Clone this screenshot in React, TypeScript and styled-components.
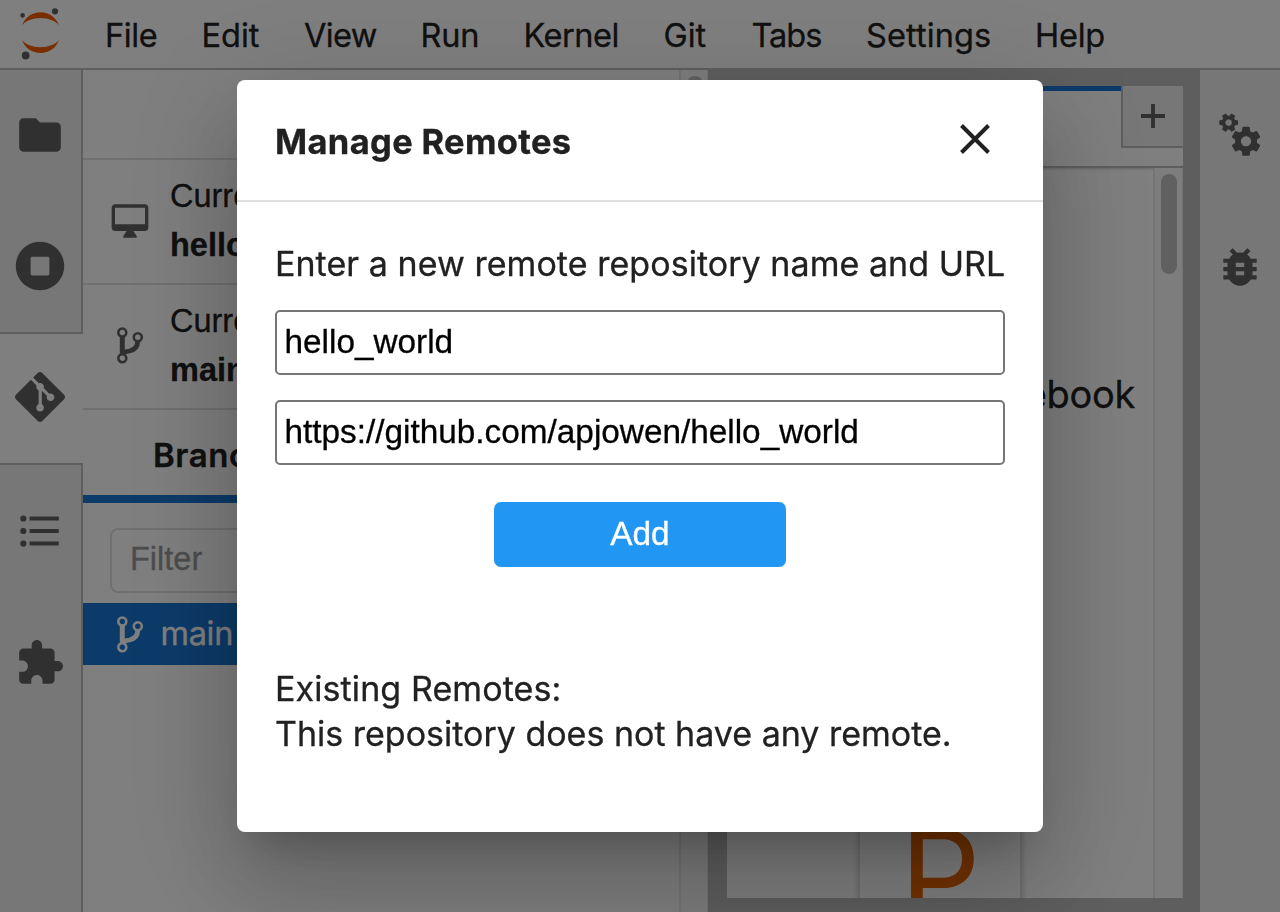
import React from 'react';
import styled, { createGlobalStyle } from 'styled-components';
import { SiGit } from 'react-icons/si';

const UI = `Inter, 'Liberation Sans', sans-serif`;
const ARIAL = `'Liberation Sans', Arial, sans-serif`;

const GlobalStyle = createGlobalStyle`
  *, *::before, *::after { box-sizing: border-box; }
  body { margin: 0; overflow: hidden; font-family: ${UI}; color: #212121; -webkit-text-stroke: 0.3px; }
`;

const Page = styled.div`
  width: 1280px;
  height: 912px;
  display: flex;
  flex-direction: column;
  background: #fff;
  overflow: hidden;
`;

const MenuBar = styled.header`
  flex: none;
  height: 70px;
  display: flex;
  align-items: center;
  border-bottom: 2px solid #bdbdbd;
`;

const LogoBox = styled.div`
  width: 105px;
  height: 68px;
`;

const MenuItem = styled.span<{ $width: number; $tracking?: number }>`
  width: ${(p) => p.$width}px;
  font-size: 32.5px;
  line-height: 40px;
  padding-top: 4px;
  white-space: nowrap;
  letter-spacing: ${(p) => p.$tracking ?? 0}px;
`;

const Main = styled.div`
  flex: 1;
  min-height: 0;
  display: flex;
`;

const SideBar = styled.nav`
  flex: none;
  width: 83px;
  display: flex;
  flex-direction: column;
  background: #eee;
`;

const RightBar = styled(SideBar)`
  width: 80px;
`;

const SideTab = styled.div<{ $height: number; $active?: boolean; $edge?: boolean }>`
  flex: none;
  height: ${(p) => p.$height}px;
  display: flex;
  align-items: center;
  justify-content: center;
  color: #616161;
  background: ${(p) => (p.$active ? '#fff' : '#eee')};
  border: 0 solid #bdbdbd;
  border-right-width: ${(p) => (p.$edge ? 2 : 0)}px;
  padding-right: ${(p) => (p.$edge ? 2 : 0)}px;
  ${(p) => p.$active && 'border-top-width: 2px; border-bottom-width: 2px; padding: 0 3px 4px 0;'}
  svg { display: block; flex: none; }
`;

const SideFill = styled.div`
  flex: 1;
  border-right: 2px solid #bdbdbd;
`;

const GitPanel = styled.section`
  flex: none;
  width: 625px;
  display: flex;
`;

const GitContent = styled.div`
  width: 596px;
  display: flex;
  flex-direction: column;
`;

const ScrollTrack = styled.div<{ $width: number; $top: number }>`
  flex: none;
  width: ${(p) => p.$width}px;
  padding-top: ${(p) => p.$top}px;
  padding-left: 1px;
  display: flex;
  justify-content: center;
  background: #fafafa;
  border: solid #e8e8e8;
  border-width: 0 1px 0 2px;
`;

const Thumb = styled.div<{ $height: number }>`
  width: 16px;
  height: ${(p) => p.$height}px;
  border-radius: 8px;
  background: #c1c1c1;
`;

const GitToolbar = styled.div`
  height: 90px;
  border-bottom: 2px solid #e0e0e0;
`;

const RepoRow = styled.div`
  height: 125px;
  display: flex;
  border-bottom: 2px solid #e0e0e0;
`;

const RepoIcon = styled.div`
  width: 87px;
  padding: 0 0 2px 7px;
  display: flex;
  align-items: center;
  justify-content: center;
  color: #616161;
`;

const RepoText = styled.div`
  padding-top: 12px;
  font: 32.5px/49px ${ARIAL};
  white-space: nowrap;
  strong { display: block; }
`;

const BranchTabs = styled.div`
  height: 93px;
  padding: 5px 0 0 70px;
  border-bottom: 8px solid #1976d2;
  font-size: 33px;
  font-weight: 600;
  line-height: 80px;
  letter-spacing: 0.6px;
`;

const Filter = styled.div`
  height: 65px;
  margin: 25px 27px 10px;
  padding: 0 18px;
  border: 2px solid #e0e0e0;
  border-radius: 8px;
  color: #9a9a9a;
  font: 32.5px/59px ${ARIAL};
`;

const BranchRow = styled.div`
  height: 62px;
  padding: 0 0 0 34px;
  display: flex;
  align-items: center;
  gap: 16.5px;
  background: #1976d2;
  color: #fff;
  font-size: 32.5px;
  line-height: 40px;
  letter-spacing: -0.3px;
`;

const Dock = styled.section`
  flex: 1;
  min-width: 0;
  display: flex;
  flex-direction: column;
  padding: 16px 17px 14px 19px;
  background: #bdbdbd;
`;

const DockTabs = styled.div`
  flex: none;
  height: 82px;
  display: flex;
  align-items: flex-start;
  background: #fff;
  border-bottom: 2px solid #bdbdbd;
`;

const DockTab = styled.div`
  flex: 1;
  height: 80px;
  border-top: 5px solid #1976d2;
`;

const NewTab = styled.div`
  width: 62px;
  height: 62px;
  display: flex;
  align-items: center;
  justify-content: center;
  background: #eee;
  border: solid #bdbdbd;
  border-width: 0 0 2px 2px;
`;

const Launcher = styled.div`
  flex: 1;
  min-height: 0;
  display: flex;
  background: #fff;
  box-shadow: inset 0 3px 3px -2px #0003;
`;

const LauncherBody = styled.div`
  flex: 1;
  min-width: 0;
  overflow: hidden;
`;

const LauncherHeading = styled.h2`
  margin: 0;
  height: 480px;
  padding: 201px 18px 0 0;
  text-align: right;
  font-size: 38px;
  font-weight: 400;
  line-height: 50px;
  letter-spacing: -0.3px;
`;

const LauncherCard = styled.div`
  width: 160px;
  height: 270px;
  margin-left: 133px;
  padding: 127px 0 0 40px;
  box-shadow: 0 0 6px 2px rgba(0, 0, 0, 0.2);
  color: #e66300;
  font: 400 126px/200px ${UI};
  -webkit-text-stroke: 0;
`;

const Backdrop = styled.div`
  position: fixed;
  inset: 0;
  display: flex;
  align-items: center;
  justify-content: center;
  background: rgba(0, 0, 0, 0.5);
`;

const Dialog = styled.div`
  width: 806px;
  height: 752px;
  background: #fff;
  border-radius: 8px;
  box-shadow:
    0 27.5px 37.5px -17.5px rgba(0, 0, 0, 0.2),
    0 60px 95px 7.5px rgba(0, 0, 0, 0.14),
    0 22.5px 115px 20px rgba(0, 0, 0, 0.12);
`;

const DialogHeader = styled.div`
  height: 122px;
  padding: 0 52px 0 38px;
  display: flex;
  align-items: center;
  justify-content: space-between;
  border-bottom: 2px solid #e0e0e0;
`;

const DialogTitle = styled.h1`
  margin: 0;
  padding-top: 4px;
  font-size: 34.5px;
  font-weight: 700;
  line-height: 44px;
  letter-spacing: 0.33px;
`;

const CloseIcon = styled.svg`
  display: block;
  margin-top: -2px;
`;

const DialogBody = styled.div`
  padding: 39px 38px 0;
  display: flex;
  flex-direction: column;
`;

const Line = styled.p<{ $tracking: number }>`
  margin: 0;
  font-size: 34px;
  line-height: 45px;
  white-space: nowrap;
  letter-spacing: ${(p) => p.$tracking}px;
`;

const Field = styled.input`
  width: 730px;
  height: 65px;
  margin: 0 0 25px;
  padding: 0 8px 1px 7.5px;
  border: 2px solid #767676;
  border-radius: 5px;
  outline: none;
  background: #fff;
  color: #000;
  font: 33.33px ${ARIAL};
`;

const Fields = styled.div`
  margin-top: 24px;
  display: flex;
  flex-direction: column;
`;

const AddButton = styled.button`
  align-self: center;
  width: 292px;
  height: 65px;
  margin: 12px 0 99px;
  padding: 0 0 2px;
  border: 0;
  border-radius: 7px;
  background: #2196f3;
  color: #fff;
  font: 33.33px ${ARIAL};
`;

const Glyph = ({ d, size = 50, box = 24 }: { d: string; size?: number; box?: number }) => (
  <svg width={size} height={size} viewBox={`0 0 ${box} ${box}`} fill="currentColor">
    <path d={d} />
  </svg>
);

const FOLDER = 'M10 4H4c-1.1 0-1.99.9-1.99 2L2 18c0 1.1.9 2 2 2h16c1.1 0 2-.9 2-2V8c0-1.1-.9-2-2-2h-8l-2-2z';
const RUNNING =
  'M256 8C119 8 8 119 8 256s111 248 248 248 248-111 248-248S393 8 256 8zm96 328c0 8.8-7.2 16-16 16H176c-8.8 0-16-7.2-16-16V176c0-8.8 7.2-16 16-16h160c8.8 0 16 7.2 16 16v160z';
const TOC =
  'M7,5H21V7H7V5M7,13V11H21V13H7M4,4.5A1.5,1.5 0 0,1 5.5,6A1.5,1.5 0 0,1 4,7.5A1.5,1.5 0 0,1 2.5,6A1.5,1.5 0 0,1 4,4.5M4,10.5A1.5,1.5 0 0,1 5.5,12A1.5,1.5 0 0,1 4,13.5A1.5,1.5 0 0,1 2.5,12A1.5,1.5 0 0,1 4,10.5M7,19V17H21V19H7M4,16.5A1.5,1.5 0 0,1 5.5,18A1.5,1.5 0 0,1 4,19.5A1.5,1.5 0 0,1 2.5,18A1.5,1.5 0 0,1 4,16.5Z';
const EXTENSION =
  'M20.5 11H19V7c0-1.1-.9-2-2-2h-4V3.5C13 2.12 11.88 1 10.5 1S8 2.12 8 3.5V5H4c-1.1 0-1.99.9-1.99 2v3.8H3.5c1.49 0 2.7 1.21 2.7 2.7s-1.21 2.7-2.7 2.7H2V20c0 1.1.9 2 2 2h3.8v-1.5c0-1.49 1.21-2.7 2.7-2.7 1.49 0 2.7 1.21 2.7 2.7V22H17c1.1 0 2-.9 2-2v-4h1.5c1.38 0 2.5-1.12 2.5-2.5S21.88 11 20.5 11z';
const BUG =
  'M20 8h-2.81c-.45-.78-1.07-1.45-1.82-1.96L17 4.41 15.59 3l-2.17 2.17C12.96 5.06 12.49 5 12 5c-.49 0-.96.06-1.41.17L8.41 3 7 4.41l1.62 1.63C7.88 6.55 7.26 7.22 6.81 8H4v2h2.09c-.05.33-.09.66-.09 1v1H4v2h2v1c0 .34.04.67.09 1H4v2h2.81c1.04 1.79 2.97 3 5.19 3s4.15-1.21 5.19-3H20v-2h-2.09c.05-.33.09-.66.09-1v-1h2v-2h-2v-1c0-.34-.04-.67-.09-1H20V8zm-6 8h-4v-2h4v2zm0-4h-4v-2h4v2z';
const DESKTOP =
  'M21 2H3c-1.1 0-2 .9-2 2v12c0 1.1.9 2 2 2h7l-2 3v1h8v-1l-2-3h7c1.1 0 2-.9 2-2V4c0-1.1-.9-2-2-2zm0 12H3V4h18v10z';
const GEAR =
  'M14.9 17.45C16.25 17.45 17.35 16.35 17.35 15C17.35 13.65 16.25 12.55 14.9 12.55C13.54 12.55 12.45 13.65 12.45 15C12.45 16.35 13.54 17.45 14.9 17.45ZM20.1 15.68L21.58 16.84C21.71 16.95 21.75 17.13 21.66 17.29L20.26 19.71C20.17 19.86 20 19.92 19.83 19.86L18.09 19.16C17.73 19.44 17.33 19.67 16.91 19.85L16.64 21.7C16.62 21.87 16.47 22 16.3 22H13.5C13.32 22 13.18 21.87 13.15 21.7L12.89 19.85C12.46 19.67 12.07 19.44 11.71 19.16L9.96 19.86C9.81 19.92 9.62 19.86 9.54 19.71L8.14 17.29C8.05 17.13 8.09 16.95 8.22 16.84L9.7 15.68L9.65 15L9.7 14.31L8.22 13.16C8.09 13.05 8.05 12.86 8.14 12.71L9.54 10.29C9.62 10.13 9.81 10.07 9.96 10.13L11.71 10.84C12.07 10.56 12.46 10.32 12.89 10.15L13.15 8.29C13.18 8.13 13.32 8 13.5 8H16.3C16.47 8 16.62 8.13 16.64 8.29L16.91 10.15C17.33 10.32 17.73 10.56 18.09 10.84L19.83 10.13C20 10.07 20.17 10.13 20.26 10.29L21.66 12.71C21.75 12.86 21.71 13.05 21.58 13.16L20.1 14.31L20.15 15L20.1 15.68Z';

const Gears = () => (
  <svg width="50" height="50" viewBox="0 0 24 24" fill="currentColor" fillRule="evenodd">
    <path d={GEAR} />
    <path d={GEAR} transform="translate(6.54 6.08) rotate(30) scale(.64) translate(-14.9 -15)" />
  </svg>
);

const Branch = () => (
  <svg width="27" height="37" viewBox="0 0 27 37" fill="none" stroke="currentColor">
    <g strokeWidth="2.6">
      <circle cx="5.3" cy="5.5" r="4" />
      <circle cx="20.8" cy="10.3" r="4" />
      <circle cx="5.3" cy="31.2" r="4" />
    </g>
    <path d="M5.3 9.4V27.3" strokeWidth="5" />
    <path d="M20.8 14.2C20.6 20.5 17.5 23 12.5 24C8.8 24.6 7 25.2 5.6 27" strokeWidth="4.8" />
  </svg>
);

const Logo = () => (
  <svg width="80" height="68" viewBox="0 0 80 68">
    <g fill="#f25c05">
      <path d="M22 25.5C25 17.5 32 12.3 40.5 12.3S56 17.5 59 25.5C55.5 20.8 48.5 18 40.5 18S25.5 20.8 22 25.5Z" />
      <path d="M22 40C25 48 32 53 40.5 53S56 48 59 40C55.5 44.5 48.5 47.2 40.5 47.2S25.5 44.5 22 40Z" />
    </g>
    <g fill="#616161">
      <circle cx="22.6" cy="15.4" r="2.3" />
      <circle cx="55" cy="11.3" r="3.1" />
      <circle cx="25.7" cy="55.5" r="3.9" />
    </g>
  </svg>
);

const MENU: [string, number, number][] = [
  ['File', 96.5, -0.4],
  ['Edit', 102.5, 0],
  ['View', 116.5, -0.6],
  ['Run', 103, -0.2],
  ['Kernel', 140, -0.5],
  ['Git', 88, 0],
  ['Tabs', 114.5, -1],
  ['Settings', 169, 0.1],
  ['Help', 80, -0.2],
];

export default function App() {
  return (
    <>
      <GlobalStyle />
      <Page>
        <MenuBar>
          <LogoBox>
            <Logo />
          </LogoBox>
          {MENU.map(([label, width, tracking]) => (
            <MenuItem key={label} $width={width} $tracking={tracking}>
              {label}
            </MenuItem>
          ))}
        </MenuBar>
        <Main>
          <SideBar>
            <SideTab $height={130} $edge><Glyph d={FOLDER} /></SideTab>
            <SideTab $height={132} $edge><Glyph d={RUNNING} box={512} /></SideTab>
            <SideTab $height={133} $active><SiGit size={50} /></SideTab>
            <SideTab $height={131} $edge><Glyph d={TOC} /></SideTab>
            <SideTab $height={133} $edge><Glyph d={EXTENSION} /></SideTab>
            <SideFill />
          </SideBar>
          <GitPanel>
            <GitContent>
              <GitToolbar />
              <RepoRow>
                <RepoIcon><Glyph d={DESKTOP} size={40} /></RepoIcon>
                <RepoText>Current Repository<strong>hello_world</strong></RepoText>
              </RepoRow>
              <RepoRow>
                <RepoIcon><Branch /></RepoIcon>
                <RepoText>Current Branch<strong>main</strong></RepoText>
              </RepoRow>
              <BranchTabs>Branches</BranchTabs>
              <Filter>Filter</Filter>
              <BranchRow><Branch />main</BranchRow>
            </GitContent>
            <ScrollTrack $width={29} $top={6}><Thumb $height={700} /></ScrollTrack>
          </GitPanel>
          <Dock>
            <DockTabs>
              <DockTab />
              <NewTab>
                <svg width="24" height="24" viewBox="0 0 24 24" stroke="#616161" strokeWidth="3.8">
                  <path d="M12 0V24M0 12H24" />
                </svg>
              </NewTab>
            </DockTabs>
            <Launcher>
              <LauncherBody>
                <LauncherHeading>Notebook</LauncherHeading>
                <LauncherCard>P</LauncherCard>
              </LauncherBody>
              <ScrollTrack $width={30} $top={6}><Thumb $height={100} /></ScrollTrack>
            </Launcher>
          </Dock>
          <RightBar>
            <SideTab $height={130}><Gears /></SideTab>
            <SideTab $height={134}><Glyph d={BUG} /></SideTab>
          </RightBar>
        </Main>
      </Page>
      <Backdrop>
        <Dialog>
          <DialogHeader>
            <DialogTitle>Manage Remotes</DialogTitle>
            <CloseIcon width="32" height="32" viewBox="0 0 32 32" stroke="#212121" strokeWidth="4">
              <path d="M2.5 2.5L29.5 29.5M29.5 2.5L2.5 29.5" />
            </CloseIcon>
          </DialogHeader>
          <DialogBody>
            <Line $tracking={0.05}>Enter a new remote repository name and URL</Line>
            <Fields>
              <Field defaultValue="hello_world" />
              <Field defaultValue="https://github.com/apjowen/hello_world" />
            </Fields>
            <AddButton>Add</AddButton>
            <Line $tracking={0.1}>Existing Remotes:</Line>
            <Line $tracking={0}>This repository does not have any remote.</Line>
          </DialogBody>
        </Dialog>
      </Backdrop>
    </>
  );
}
